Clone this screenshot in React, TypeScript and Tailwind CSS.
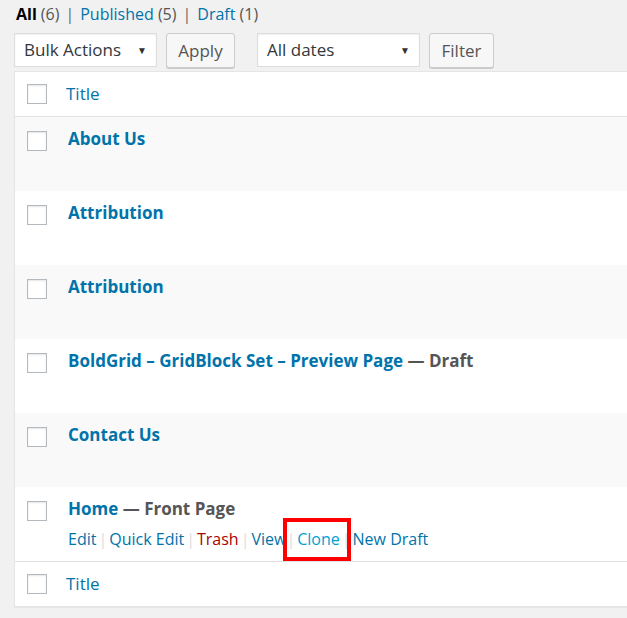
import React from 'react';

type Row = { title: string; state?: string; actions?: boolean };

const rows: Row[] = [
  { title: 'About Us' },
  { title: 'Attribution' },
  { title: 'Attribution' },
  { title: 'BoldGrid – GridBlock Set – Preview Page', state: 'Draft' },
  { title: 'Contact Us' },
  { title: 'Home', state: 'Front Page', actions: true },
];

function Checkbox() {
  return (
    <span className="block h-[20px] w-[20px] shrink-0 border border-[#b4b9be] bg-white shadow-[inset_0_1px_2px_rgba(0,0,0,0.1)]" />
  );
}

function Select({ label, width }: { label: string; width: string }) {
  return (
    <div
      className={`flex h-[34px] ${width} items-center justify-between border border-[#ddd] bg-white pl-[9px] pr-[9px] text-[17px] text-[#32373c] shadow-[inset_0_1px_2px_rgba(0,0,0,0.07)]`}
    >
      <span>{label}</span>
      <span className="text-[10px] text-[#333]">▼</span>
    </div>
  );
}

function Button({ label, width }: { label: string; width: string }) {
  return (
    <div
      className={`flex h-[35px] ${width} items-center justify-center rounded-[3px] border border-[#ccc] bg-[#f7f7f7] text-[17px] text-[#555] shadow-[0_1px_0_#ccc]`}
    >
      {label}
    </div>
  );
}

function RowActions() {
  const sep = <span className="px-[2px] text-[#ddd]">|</span>;
  return (
    <div className="relative mt-[8px] flex items-center text-[16px] leading-[20px]">
      <span className="text-[#0073aa]">Edit</span>
      {sep}
      <span className="text-[#0073aa]">Quick Edit</span>
      {sep}
      <span className="text-[#a00]">Trash</span>
      {sep}
      <span className="text-[#0073aa]">View</span>
      <span className="relative">
        <span className="text-[#ddd]">|</span>
        <span className="px-[2px] text-[#00a0d2]">Clone</span>
        <span className="text-[#ddd]">|</span>
        {/* highlight annotation */}
        <span className="absolute left-[-3px] top-[-11px] h-[43px] w-[68px] border-[4px] border-[#ff0000]" />
      </span>
      <span className="pl-[2px] text-[#0073aa]">New Draft</span>
    </div>
  );
}

export default function App() {
  return (
    <div className="h-[618px] w-[627px] overflow-hidden bg-[#f1f1f1] font-['Open_Sans',sans-serif] text-[#444]">
      <div className="flex h-[27px] items-center pl-[16px] text-[16px]">
        <span className="font-bold text-black">All</span>
        <span className="ml-[4px] text-[#555]">(6)</span>
        <span className="px-[6px] text-[#666]">|</span>
        <span className="text-[#0073aa]">Published <span className="text-[#555]">(5)</span></span>
        <span className="px-[6px] text-[#666]">|</span>
        <span className="text-[#0073aa]">Draft <span className="text-[#555]">(1)</span></span>
      </div>

      <div className="mt-[6px] flex items-start pl-[14px]">
        <Select label="Bulk Actions" width="w-[143px]" />
        <div className="ml-[9px]">
          <Button label="Apply" width="w-[69px]" />
        </div>
        <div className="ml-[22px]">
          <Select label="All dates" width="w-[163px]" />
        </div>
        <div className="ml-[9px]">
          <Button label="Filter" width="w-[65px]" />
        </div>
      </div>

      <div className="ml-[14px] mt-[3px] w-[640px] border border-[#e5e5e5] bg-white shadow-[0_1px_1px_rgba(0,0,0,0.04)]">
        <div className="flex h-[45px] items-center gap-[19px] border-b border-[#e1e1e1] pl-[12px]">
          <Checkbox />
          <span className="text-[17px] text-[#0073aa]">Title</span>
        </div>

        {rows.map((row, i) => (
          <div
            key={i}
            className={`flex h-[74px] items-start gap-[21px] pl-[12px] pt-[14px] ${
              i % 2 === 0 ? 'bg-[#f9f9f9]' : 'bg-white'
            }`}
          >
            <Checkbox />
            <div className="-mt-[4px]">
              <div className="text-[17px] font-bold leading-[24px]">
                <span className="text-[#0073aa]">{row.title}</span>
                {row.state && <span className="text-[#555]"> — {row.state}</span>}
              </div>
              {row.actions && <RowActions />}
            </div>
          </div>
        ))}

        <div className="flex h-[45px] items-center gap-[19px] border-t border-[#e1e1e1] pl-[12px]">
          <Checkbox />
          <span className="text-[17px] text-[#0073aa]">Title</span>
        </div>
      </div>
    </div>
  );
}
